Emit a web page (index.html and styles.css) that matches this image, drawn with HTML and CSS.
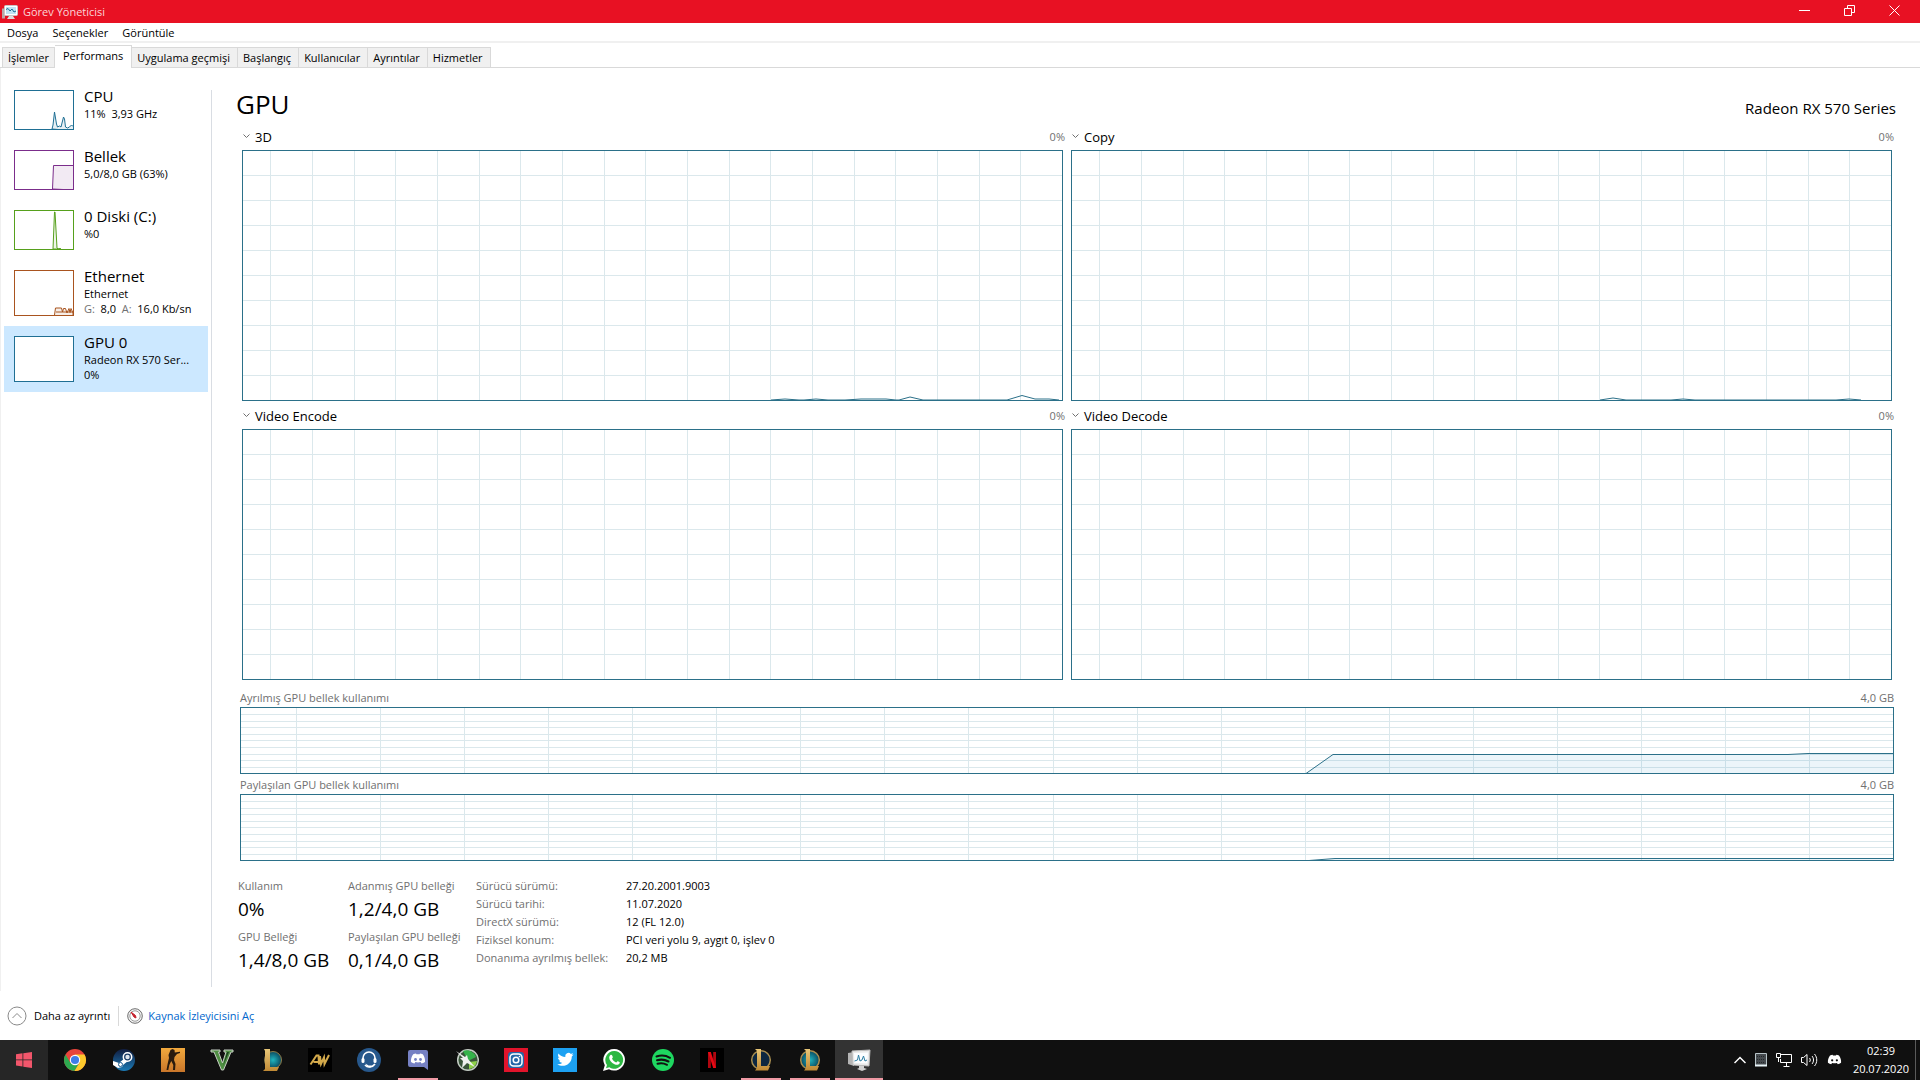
FILE: index.html
```html
<!DOCTYPE html>
<html lang="tr">
<head>
    <meta charset="UTF-8">
    <meta name="viewport" content="width=device-width, initial-scale=1.0">
    <title>Görev Yöneticisi</title>
    <link rel="stylesheet" href="styles.css">
</head>
<body>
    <!-- shared shapes -->
    <svg class="defs" aria-hidden="true">
        <defs>
            <path id="engineGrid" d="M27.5 0v249M69.5 0v249M111.5 0v249M152.5 0v249M194.5 0v249M236.5 0v249M277.5 0v249M319.5 0v249M361.5 0v249M402.5 0v249M444.5 0v249M486.5 0v249M527.5 0v249M569.5 0v249M611.5 0v249M652.5 0v249M694.5 0v249M736.5 0v249M777.5 0v249M0 24.5h819M0 49.5h819M0 74.5h819M0 99.5h819M0 124.5h819M0 149.5h819M0 174.5h819M0 199.5h819M0 224.5h819"/>
            <path id="memoryGrid" d="M55.5 0v65M139.5 0v65M223.5 0v65M307.5 0v65M391.5 0v65M475.5 0v65M559.5 0v65M643.5 0v65M727.5 0v65M812.5 0v65M896.5 0v65M980.5 0v65M1064.5 0v65M1148.5 0v65M1232.5 0v65M1316.5 0v65M1400.5 0v65M1484.5 0v65M1568.5 0v65M0 6.5h1652M0 13.5h1652M0 19.5h1652M0 26.5h1652M0 32.5h1652M0 39.5h1652M0 46.5h1652M0 52.5h1652M0 59.5h1652"/>
            <path id="chevron" d="M.5 .5l3 3 3-3"/>
            <linearGradient id="gold" x1="0" y1="0" x2="0" y2="1">
                <stop offset="0" stop-color="#e9c778"/>
                <stop offset="1" stop-color="#c08a35"/>
            </linearGradient>
            <radialGradient id="teal">
                <stop offset="0" stop-color="#1fb5bf"/>
                <stop offset="1" stop-color="#0b4a60"/>
            </radialGradient>
            <linearGradient id="steamBlue" x1="0" y1="0" x2="0" y2="1">
                <stop offset="0" stop-color="#111d40"/>
                <stop offset="1" stop-color="#1b7ab5"/>
            </linearGradient>
            <linearGradient id="sand" x1="0" y1="0" x2="0" y2="1">
                <stop offset="0" stop-color="#f2a93d"/>
                <stop offset="1" stop-color="#c9762a"/>
            </linearGradient>
            <path id="discordFace" d="M4.2 1.3C5.200.8 6.300.5 7 .5l.4.8h3.200l.4-.8c.7 0 1.800.3 2.800.8 1.700 2.400 2.500 5 2.200 7.700-1.200.9-2.400 1.400-3.500 1.600l-.9-1.500c-1.700.5-3.500.5-5.200 0l-.9 1.500C4.400 10.400 3.200 9.900 2 9c-.3-2.700.5-5.300 2.200-7.700z"/>
        </defs>
    </svg>

    <header class="titlebar">
        <svg class="app-icon" width="16" height="16" viewBox="0 0 16 16">
            <path d="M0 4.500h3v10H0z" fill="#b9a9a9"/>
            <rect x="2.500" y="1.500" width="13" height="10" rx="1" fill="#fff" stroke="#c9c4c4"/>
            <rect x="4" y="3" width="10" height="7" fill="#bfe3f3"/>
            <path d="M4 5.500l2-1 2 2.500 2-2 2 3 2-1" fill="none" stroke="#1d6f94"/>
            <path d="M7 12h4l2 3H5z" fill="#ddd"/>
        </svg>
        <h1 class="app-title">Görev Yöneticisi</h1>
        <div class="window-buttons">
            <button aria-label="Simge durumuna küçült"><svg width="11" height="11"><path d="M0 5.500h11"/></svg></button>
            <button aria-label="Önceki boyut"><svg width="11" height="11"><path d="M.5 3.500h7v7h-7zM3.500 3V.5h7v7H8"/></svg></button>
            <button aria-label="Kapat"><svg width="11" height="11"><path d="M.5 .5l10 10M10.500.5l-10 10"/></svg></button>
        </div>
    </header>

    <nav class="menu">
        <button>Dosya</button>
        <button>Seçenekler</button>
        <button>Görüntüle</button>
    </nav>

    <div class="tabs" role="tablist">
        <button role="tab">İşlemler</button>
        <button role="tab" class="active" aria-selected="true">Performans</button>
        <button role="tab">Uygulama geçmişi</button>
        <button role="tab">Başlangıç</button>
        <button role="tab">Kullanıcılar</button>
        <button role="tab">Ayrıntılar</button>
        <button role="tab">Hizmetler</button>
    </div>

    <div class="content">
        <aside class="sidebar">
            <button class="device">
                <svg class="thumb cpu" viewBox="0 0 58 38" preserveAspectRatio="none">
                    <path d="M37 38l1-4 1.500-13 2 12 1 3 2-1 1.500 1 2.500-10 1 2 1 8 2 1 2-1 2-2 1 1 2-1 2 1v5z"/>
                </svg>
                <span class="device-text"><span class="device-name">CPU</span><span class="device-info">11%&nbsp; 3,93 GHz</span></span>
            </button>
            <button class="device">
                <svg class="thumb ram" viewBox="0 0 58 38" preserveAspectRatio="none">
                    <path d="M37.500 38l1-23.500H59V39z"/>
                </svg>
                <span class="device-text"><span class="device-name">Bellek</span><span class="device-info">5,0/8,0 GB (63%)</span></span>
            </button>
            <button class="device">
                <svg class="thumb disk" viewBox="0 0 58 38" preserveAspectRatio="none">
                    <path d="M38 38l1.500-37h.5L42 37l1 1 2-.5 1 .5z"/>
                </svg>
                <span class="device-text"><span class="device-name">0 Diski (C:)</span><span class="device-info">%0</span></span>
            </button>
            <button class="device">
                <svg class="thumb net tall" viewBox="0 0 58 44" preserveAspectRatio="none">
                    <path d="M39.500 44l1-7h6l1 4 1-3.500h2l1.500 4.500 2-4.500 1 4 1-4 2 4.500V44M41 41h17"/>
                </svg>
                <span class="device-text"><span class="device-name">Ethernet</span><span class="device-info">Ethernet</span><span class="device-info"><span class="dim">G:</span>&nbsp; 8,0 &nbsp;<span class="dim">A:</span>&nbsp; 16,0 Kb/sn</span></span>
            </button>
            <button class="device selected">
                <svg class="thumb gpu tall" viewBox="0 0 58 44"></svg>
                <span class="device-text"><span class="device-name">GPU 0</span><span class="device-info">Radeon RX 570 Ser...</span><span class="device-info">0%</span></span>
            </button>
        </aside>

        <main class="panel">
            <div class="panel-head">
                <h2>GPU</h2>
                <span class="model">Radeon RX 570 Series</span>
            </div>

            <div class="engines">
                <section class="engine">
                    <div class="engine-head">
                        <button><svg width="7" height="5"><use href="#chevron"/></svg>3D</button>
                        <span>0%</span>
                    </div>
                    <svg class="chart" viewBox="0 0 819 249" preserveAspectRatio="none">
                        <use href="#engineGrid" class="grid"/>
                        <path class="line" d="M528 249l14-1 14 1h5l12-1 12 1h17l16-1h25l10 1h3l11-3 13 3h84l15-4.500 13 3.500h14l10 1"/>
                    </svg>
                </section>
                <section class="engine">
                    <div class="engine-head">
                        <button><svg width="7" height="5"><use href="#chevron"/></svg>Copy</button>
                        <span>0%</span>
                    </div>
                    <svg class="chart" viewBox="0 0 819 249" preserveAspectRatio="none">
                        <use href="#engineGrid" class="grid"/>
                        <path class="line" d="M528 249l13-2 13 2h45l12-1 12 1h141l13-1 12 1"/>
                    </svg>
                </section>
                <section class="engine">
                    <div class="engine-head">
                        <button><svg width="7" height="5"><use href="#chevron"/></svg>Video Encode</button>
                        <span>0%</span>
                    </div>
                    <svg class="chart" viewBox="0 0 819 249" preserveAspectRatio="none"><use href="#engineGrid" class="grid"/></svg>
                </section>
                <section class="engine">
                    <div class="engine-head">
                        <button><svg width="7" height="5"><use href="#chevron"/></svg>Video Decode</button>
                        <span>0%</span>
                    </div>
                    <svg class="chart" viewBox="0 0 819 249" preserveAspectRatio="none"><use href="#engineGrid" class="grid"/></svg>
                </section>
            </div>

            <div class="memory">
                <div class="memory-head"><span>Ayrılmış GPU bellek kullanımı</span><span>4,0 GB</span></div>
                <svg class="chart memory-chart" viewBox="0 0 1652 65" preserveAspectRatio="none">
                    <use href="#memoryGrid" class="grid"/>
                    <path class="line area" d="M1065 65.500l27-19h455l20-1h86V66z"/>
                </svg>
                <div class="memory-head"><span>Paylaşılan GPU bellek kullanımı</span><span>4,0 GB</span></div>
                <svg class="chart memory-chart" viewBox="0 0 1652 65" preserveAspectRatio="none">
                    <use href="#memoryGrid" class="grid"/>
                    <path class="line area" d="M1068 65.500l26-2h559V66z"/>
                </svg>
            </div>

            <div class="stats">
                <dl class="totals">
                    <div><dt>Kullanım</dt><dd>0%</dd></div>
                    <div><dt>Adanmış GPU belleği</dt><dd>1,2/4,0 GB</dd></div>
                    <div><dt>GPU Belleği</dt><dd>1,4/8,0 GB</dd></div>
                    <div><dt>Paylaşılan GPU belleği</dt><dd>0,1/4,0 GB</dd></div>
                </dl>
                <dl class="details">
                    <dt>Sürücü sürümü:</dt><dd>27.20.2001.9003</dd>
                    <dt>Sürücü tarihi:</dt><dd>11.07.2020</dd>
                    <dt>DirectX sürümü:</dt><dd>12 (FL 12.0)</dd>
                    <dt>Fiziksel konum:</dt><dd>PCI veri yolu 9, aygıt 0, işlev 0</dd>
                    <dt>Donanıma ayrılmış bellek:</dt><dd>20,2 MB</dd>
                </dl>
            </div>
        </main>
    </div>

    <footer class="footer">
        <button class="less">
            <svg width="20" height="20"><circle cx="10" cy="10" r="9"/><path d="M5.500 12l4.500-4.500 4.500 4.500"/></svg>
            Daha az ayrıntı
        </button>
        <a class="monitor" href="#">
            <svg width="16" height="16" viewBox="0 0 16 16">
                <circle cx="8" cy="8" r="7.300" fill="#f4f4f4" stroke="#6d6d6d"/>
                <circle cx="8" cy="8" r="5.200" fill="#fff" stroke="#9c9c9c"/>
                <path d="M4 4l4.500 3.500.5 2.500-2-1z" fill="#c3202c" stroke="#c3202c"/>
            </svg>
            Kaynak İzleyicisini Aç
        </a>
    </footer>

    <div class="taskbar">
        <button class="start" aria-label="Başlat">
            <svg width="16" height="16" viewBox="0 0 16 16" fill="#f2566b"><path d="M0 2.200l6.500-.9v6.200H0zM7.300 1.200L16 0v7.500H7.300zM0 8.300h6.500v6.200L0 13.600zM7.300 8.300H16V16l-8.700-1.300z"/></svg>
        </button>
        <div class="apps">
            <button aria-label="Chrome">
                <svg width="24" height="24" viewBox="0 0 24 24">
                    <circle cx="12" cy="12" r="11" fill="#e8453c"/>
                    <path d="M2.500 6.500A11 11 0 0 0 11.500 23l5-8.500L12 12l-4.500 3z" fill="#2da94f"/>
                    <path d="M21.500 6.500H12l4.700 8-5.200 8.500A11 11 0 0 0 21.500 6.500z" fill="#fdc92c"/>
                    <circle cx="12" cy="12" r="5.200" fill="#fff"/>
                    <circle cx="12" cy="12" r="4.100" fill="#3f7de8"/>
                </svg>
            </button>
            <button aria-label="Steam">
                <svg width="24" height="24" viewBox="0 0 24 24">
                    <circle cx="12" cy="12" r="11" fill="url(#steamBlue)"/>
                    <path d="M1 13l6 2 6-5 3 3-5 4-1 2-4 1-5-3z" fill="#fff"/>
                    <circle cx="15.500" cy="9" r="4.200" fill="#1a3c66" stroke="#fff" stroke-width="1.500"/>
                    <circle cx="15.500" cy="9" r="2.200" fill="#dfe6ee"/>
                    <circle cx="8.500" cy="16.500" r="2" fill="none" stroke="#1d5c91"/>
                </svg>
            </button>
            <button aria-label="Counter-Strike">
                <svg width="24" height="24" viewBox="0 0 24 24">
                    <path d="M0 0h24v24H0z" fill="url(#sand)"/>
                    <path d="M9.500 2l2-1 2 1 .3 2.500 5.200-.7V5l-3 1-2.500 3-.5 3 1.500 4-.5 6h-2l.3-5-2-4-2 4-1 5H5.500l1.300-7 1.200-5L7.500 7z" fill="#2a1b0e"/>
                </svg>
            </button>
            <button aria-label="GTA V">
                <svg width="24" height="24" viewBox="0 0 24 24">
                    <path d="M1 2h9v2H8.500l4 11 3.500-11h-2V2h9v2h-2l-7.500 18h-2L4 4H1z" fill="#4f8f43" stroke="#c7cfc4"/>
                    <path d="M13 18l6-14h-2z" fill="#1d4520"/>
                </svg>
            </button>
            <button aria-label="LoL PBE">
                <svg width="24" height="24" viewBox="0 0 24 24">
                    <circle cx="14" cy="12" r="8.500" fill="url(#teal)" stroke="#8f7c48"/>
                    <path d="M5 1h6v18h9l-2 4H4l2-2V3z" fill="url(#gold)"/>
                </svg>
            </button>
            <button aria-label="AW">
                <svg width="24" height="24" viewBox="0 0 24 24">
                    <path d="M0 0h24v24H0z" fill="#000"/>
                    <path d="M2.500 16.500l6-9h2l.5 9M5.500 14h6M12 8l1 8 3-6.500.5 6.500L21 7" fill="none" stroke="#d3a94b" stroke-width="2"/>
                </svg>
            </button>
            <button aria-label="TeamSpeak">
                <svg width="24" height="24" viewBox="0 0 24 24">
                    <circle cx="12" cy="12" r="12" fill="#27588c"/>
                    <path d="M6 12V10a6 6 0 0 1 12 0v2" fill="none" stroke="#fff" stroke-width="1.600"/>
                    <rect x="4.500" y="10" width="3" height="5" rx="1.500" fill="#fff"/>
                    <rect x="16.500" y="10" width="3" height="5" rx="1.500" fill="#fff"/>
                    <path d="M8 17c2.500 3 7.500 2.500 10-1" fill="none" stroke="#fff" stroke-width="1.600"/>
                    <path d="M8.500 15.500l3 2h3l-1 2-3-.5z" fill="#fff"/>
                </svg>
            </button>
            <button class="running" aria-label="Discord">
                <svg width="24" height="24" viewBox="0 0 24 24">
                    <path d="M4 2h16a2 2 0 0 1 2 2v18l-4-3H4a2 2 0 0 1-2-2V4a2 2 0 0 1 2-2z" fill="#7681c4"/>
                    <use href="#discordFace" x="3" y="5" fill="#fff"/>
                    <circle cx="9.500" cy="11.500" r="1.400" fill="#7681c4"/>
                    <circle cx="14.500" cy="11.500" r="1.400" fill="#7681c4"/>
                </svg>
            </button>
            <button aria-label="Afterburner">
                <svg width="24" height="24" viewBox="0 0 24 24">
                    <circle cx="13" cy="12" r="10.300" fill="#39553a" stroke="#c2cbc2" stroke-width="1.500"/>
                    <path d="M8 3a10 10 0 0 1 13 6l-8 4z" fill="#35b34a"/>
                    <path d="M14 21a9 9 0 0 0 8-8l-8 1z" fill="#8fd14a"/>
                    <path d="M1 3l9 6 2-2 1 4 7 8-8-4-5 5 1-7-3-3 3 0z" fill="#eef1ee"/>
                </svg>
            </button>
            <button aria-label="Instagram">
                <svg width="24" height="24" viewBox="0 0 24 24">
                    <path d="M0 0h24v24H0z" fill="#e1142b"/>
                    <rect x="4" y="4" width="16" height="16" rx="3" fill="#2468a8"/>
                    <rect x="6" y="6" width="12" height="12" rx="3.500" fill="none" stroke="#fff" stroke-width="1.500"/>
                    <circle cx="12" cy="12" r="2.800" fill="none" stroke="#fff" stroke-width="1.500"/>
                    <circle cx="15.500" cy="8.500" r=".8" fill="#fff"/>
                </svg>
            </button>
            <button aria-label="Twitter">
                <svg width="24" height="24" viewBox="0 0 24 24">
                    <path d="M0 0h24v24H0z" fill="#1da1f2"/>
                    <path d="M20.500 6.300c-.6.300-1.200.5-1.900.6.700-.4 1.200-1 1.400-1.800-.6.400-1.300.6-2.100.8a3.300 3.300 0 0 0-5.600 3c-2.700-.1-5.200-1.400-6.800-3.500-.9 1.500-.4 3.400 1 4.400-.5 0-1-.2-1.500-.4 0 1.600 1.100 2.900 2.600 3.200-.5.100-1 .1-1.500 0 .4 1.300 1.700 2.300 3.100 2.300A6.700 6.700 0 0 1 4.300 16.300C10.300 20.100 18.800 16.500 18.800 8.500c.7-.5 1.200-1.400 1.700-2.200z" fill="#fff"/>
                </svg>
            </button>
            <button aria-label="WhatsApp">
                <svg width="24" height="24" viewBox="0 0 24 24">
                    <path d="M12.500 1A10.800 10.800 0 1 1 7 21.300L1 23l1.800-5.800A10.800 10.800 0 0 1 12.500 1z" fill="#fff"/>
                    <path d="M12.500 3A8.900 8.900 0 1 1 7.300 19.300L4 20.200l1-3.200A8.900 8.900 0 0 1 12.500 3z" fill="#2cb742"/>
                    <path d="M8.500 7c1-.8 1.600 0 2.300 2 .3.800-1 1.300-.7 1.800.9 1.700 2.200 2.900 4 3.700.5.200 1-1.500 1.700-1.200 2 1 2.400 1 1.700 2.200-1 1.600-3 1.600-5 .7-3.200-1.400-5.300-4.200-5.300-6.500 0-1 .5-2.100 1.300-2.700z" fill="#fff"/>
                </svg>
            </button>
            <button aria-label="Spotify">
                <svg width="24" height="24" viewBox="0 0 24 24">
                    <circle cx="12" cy="12" r="11" fill="#1ed760"/>
                    <path d="M5.500 8.500c4.500-1.400 9.500-1 13.500 1.300M6 12.300c4-1.200 8-.7 11.500 1.200M6.500 15.800c3.500-1 6.500-.6 9.500 1" fill="none" stroke="#111" stroke-width="2" stroke-linecap="round"/>
                </svg>
            </button>
            <button aria-label="Netflix">
                <svg width="24" height="24" viewBox="0 0 24 24">
                    <path d="M0 0h24v24H0z" fill="#000"/>
                    <path d="M8 4h2.800v16H8zM13.200 4H16v16h-2.800z" fill="#b0060f"/>
                    <path d="M8 4h2.800L16 20h-2.800z" fill="#e50914"/>
                </svg>
            </button>
            <button class="running" aria-label="Riot">
                <svg width="24" height="24" viewBox="0 0 24 24">
                    <circle cx="12" cy="12" r="9.300" fill="#0d2740" stroke="#a98e4f" stroke-width="1.500"/>
                    <path d="M6 1h6v17h9l-2 4.500H6L8 20V3z" fill="url(#gold)"/>
                </svg>
            </button>
            <button class="running" aria-label="League of Legends">
                <svg width="24" height="24" viewBox="0 0 24 24">
                    <circle cx="12" cy="12" r="9.300" fill="url(#teal)" stroke="#a98e4f" stroke-width="1.500"/>
                    <path d="M6 1h6v17h9l-2 4.500H6L8 20V3z" fill="url(#gold)"/>
                </svg>
            </button>
            <button class="running current" aria-label="Görev Yöneticisi">
                <svg width="24" height="24" viewBox="0 0 24 24">
                    <path d="M1 5l6-1v14l-6-2z" fill="#b5b5b5"/>
                    <path d="M5 3l18-1-1 16-16-1z" fill="#e9e9e9" stroke="#bdbdbd"/>
                    <path d="M7 5l14-.5-.8 11L7.500 15z" fill="#fbfdff"/>
                    <path d="M7.500 13l3-1 1-5 1.500 6 2-1 1.500-4 1.500 5 2-1" fill="none" stroke="#2c7da3"/>
                    <path d="M12 18h5v2l3 1-5 2-5-2 2-1z" fill="#d0d0d0"/>
                </svg>
            </button>
        </div>

        <div class="tray">
            <svg width="12" height="8" fill="none" stroke="#fff" stroke-width="1.500"><path d="M.5 7L6 1.500 11.500 7"/></svg>
            <svg width="12" height="14"><path d="M.5 .5h11v12H.5z" fill="#454a4e" stroke="#b8c4c8"/><path d="M2 3.500h8M2 6.500h8M2 9.500h8" stroke="#23282b" stroke-dasharray="1 1"/><path d="M0 12.500h12" stroke="#e8f4f8" stroke-width="2"/></svg>
            <svg width="16" height="14" fill="none" stroke="#fff"><path d="M5 1.500h10.500v8H4.500V6M7.500 13.500h6M10.500 9.500v4M.5 .5h4v4h-4zM2.500 5v4"/></svg>
            <svg width="17" height="14" fill="none" stroke="#fff"><path d="M.5 4.500h2l3.500-3v11l-3.500-3h-2zM8.500 5c1 1.200 1 2.800 0 4M11 3c2 2.400 2 5.600 0 8M13.500 1c3 3.500 3 8.500 0 12"/></svg>
            <svg width="15" height="12" viewBox="1 0 16 12"><use href="#discordFace" fill="#fff"/><circle cx="6.500" cy="6.300" r="1.200" fill="#111"/><circle cx="11.500" cy="6.300" r="1.200" fill="#111"/></svg>
            <div class="clock"><time>02:39</time><time>20.07.2020</time></div>
        </div>
    </div>
</body>
</html>
```
FILE: styles.css
```css
* {
    box-sizing: border-box;
}
body {
    margin: 0;
    min-height: 100vh;
    display: flex;
    flex-direction: column;
    font-family: "Open Sans", "Noto Sans", sans-serif;
    font-size: 11px;
    line-height: 16px;
    color: #000;
    background: #fff;
}
button {
    font: inherit;
    color: inherit;
    background: none;
    border: 0;
    padding: 0;
    text-align: left;
}
svg {
    display: block;
    flex: none;
}
h1, h2, dl, dt, dd {
    margin: 0;
    font-weight: normal;
}
.defs {
    position: absolute;
    width: 0;
    height: 0;
}

/* title bar */
.titlebar {
    display: flex;
    align-items: center;
    height: 23px;
    padding: 0 3px 0 2px;
    background: #e81123;
    color: #fbd5d8;
}
.app-title {
    margin-left: 5px;
    font-size: 11px;
}
.window-buttons {
    display: flex;
    align-self: flex-start;
    margin-left: auto;
}
.window-buttons button {
    width: 45px;
    height: 21px;
    display: flex;
    align-items: center;
    justify-content: center;
}
.window-buttons svg {
    fill: none;
    stroke: #fff;
}

/* menu and tabs */
.menu {
    display: flex;
    height: 20px;
    padding-top: 2px;
    border-bottom: 2px solid #f0f0f0;
}
.menu button {
    padding: 0 7px;
}
.tabs {
    display: flex;
    align-items: flex-end;
    height: 25px;
    padding-left: 2px;
    border-bottom: 1px solid #d9d9d9;
}
.tabs button {
    height: 20px;
    padding: 0 7px 0 5px;
    background: #f0f0f0;
    border: 1px solid #d9d9d9;
    border-width: 1px 1px 0 0;
}
.tabs button:first-child {
    padding-right: 5px;
    border-left-width: 1px;
}
.tabs .active {
    height: 23px;
    padding: 0 8px 3px;
    margin-bottom: -1px;
    background: #fff;
}

/* device list */
.content {
    flex: 1;
    display: flex;
    border-left: 1px solid #f0f0f0;
}
.sidebar {
    width: 211px;
    margin: 22px 0 4px;
    padding: 0 3px;
    border-right: 1px solid #d9dde3;
}
.device {
    display: flex;
    width: 204px;
    height: 60px;
    padding-left: 10px;
}
.device:first-child {
    margin-top: -10px;
}
.device:nth-child(n+4) {
    height: 66px;
}
.device.selected {
    background: #cce8ff;
}
.thumb {
    width: 60px;
    height: 40px;
    margin-top: 10px;
    border: 1px solid;
    background: #fff;
}
.thumb.tall {
    height: 46px;
}
.thumb path {
    fill: currentColor;
    fill-opacity: .1;
    stroke: currentColor;
}
.cpu, .gpu {
    color: #1f6f94;
}
.ram {
    color: #7b2d8b;
}
.disk {
    color: #56a01c;
}
.net {
    color: #a9541f;
}
.device-text {
    display: flex;
    flex-direction: column;
    margin: 6px 0 0 10px;
    line-height: 15px;
    white-space: nowrap;
}
.device-name {
    font-size: 15px;
    line-height: 20px;
}
.dim {
    color: #707070;
}

/* performance panel */
.panel {
    flex: 1;
    padding: 18px 24px 0;
}
.panel-head {
    display: flex;
    justify-content: space-between;
    align-items: baseline;
    height: 36px;
}
.panel-head h2 {
    font-size: 26px;
    line-height: 36px;
}
.model {
    font-size: 15px;
}
.engines {
    display: grid;
    grid-template-columns: 1fr 1fr;
    column-gap: 8px;
    margin: 0 4px 0 6px;
}
.engine-head {
    display: flex;
    justify-content: space-between;
    align-items: center;
    height: 28px;
    margin-right: -2px;
    padding: 1px 0 0 1px;
    font-size: 13px;
}
.engine-head button {
    display: flex;
    align-items: center;
    gap: 5px;
}
.engine-head button svg {
    fill: none;
    stroke: #707070;
}
.engine-head span {
    font-size: 11px;
    color: #707070;
}
.chart {
    width: 100%;
    height: 251px;
    border: 1px solid #2b7089;
}
.grid {
    fill: none;
    stroke: #dbe8ec;
    shape-rendering: crispEdges;
}
.line {
    fill: none;
    stroke: #2b7089;
}
.area {
    fill: rgba(17, 125, 187, .08);
}
.memory {
    margin: 7px 2px 0 4px;
}
.memory-head {
    display: flex;
    justify-content: space-between;
    height: 20px;
    padding-top: 3px;
    color: #707070;
}
.memory-chart {
    height: 67px;
}

/* figures below the charts */
.stats {
    display: flex;
    margin: 17px 0 0 2px;
}
.stats dt {
    color: #707070;
}
.totals {
    display: grid;
    grid-template-columns: 110px 128px;
    grid-auto-rows: 51px;
    white-space: nowrap;
}
.totals dd {
    font-size: 19px;
    line-height: 30px;
}
.details {
    display: grid;
    grid-template-columns: 150px auto;
    align-content: start;
    grid-auto-rows: 18px;
}

/* footer */
.footer {
    display: flex;
    align-items: center;
    height: 49px;
    padding-left: 7px;
}
.less, .monitor {
    display: flex;
    align-items: center;
    gap: 7px;
}
.less {
    padding-right: 8px;
    border-right: 1px solid #d9d9d9;
}
.less svg {
    fill: none;
    stroke: #8a8a8a;
}
.monitor {
    margin-left: 8px;
    gap: 5px;
    color: #0066cc;
    text-decoration: none;
}

/* taskbar */
.taskbar {
    display: flex;
    height: 40px;
    background: #101010;
    color: #fff;
}
.taskbar button {
    width: 48px;
    display: flex;
    align-items: center;
    justify-content: center;
}
.start {
    background: #262626;
}
.apps {
    display: flex;
    gap: 1px;
    margin-left: 3px;
}
.taskbar .start {
    background: #262626;
}
.taskbar .running {
    background: linear-gradient(#f09aa5, #f09aa5) center bottom / 40px 2px no-repeat;
}
.taskbar .current {
    background-color: #333;
    background-size: 48px 2px;
}
.tray {
    display: flex;
    align-items: center;
    gap: 9px;
    margin-left: auto;
    padding-right: 4px;
}
.clock {
    display: flex;
    flex-direction: column;
    align-self: stretch;
    margin-left: 2px;
    padding: 2px 6px 0 0;
    border-right: 1px solid #5a5a5a;
    line-height: 18px;
    text-align: center;
}
```
